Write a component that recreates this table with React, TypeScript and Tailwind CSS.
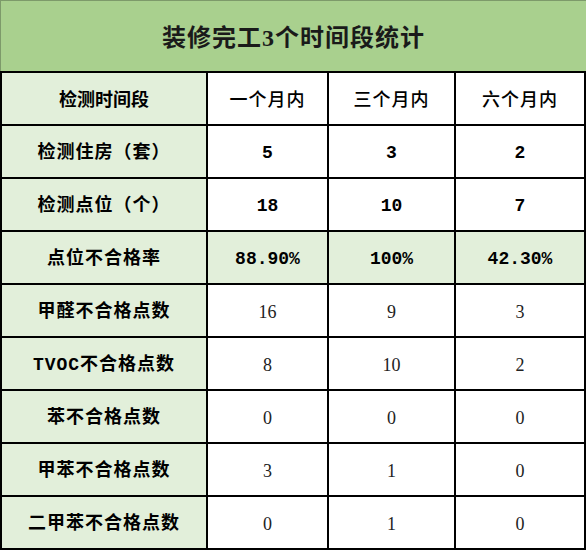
type Row = {
  label: string;
  values: string[];
  boldValues?: boolean;
  highlight?: boolean;
};

const rows: Row[] = [
  { label: "检测住房（套）", values: ["5", "3", "2"], boldValues: true },
  { label: "检测点位（个）", values: ["18", "10", "7"], boldValues: true },
  { label: "点位不合格率", values: ["88.90%", "100%", "42.30%"], boldValues: true, highlight: true },
  { label: "甲醛不合格点数", values: ["16", "9", "3"] },
  { label: "TVOC不合格点数", values: ["8", "10", "2"] },
  { label: "苯不合格点数", values: ["0", "0", "0"] },
  { label: "甲苯不合格点数", values: ["3", "1", "0"] },
  { label: "二甲苯不合格点数", values: ["0", "1", "0"] },
];

const serif = { fontFamily: '"Liberation Serif", "Noto Sans CJK SC", serif' };
const mono = { fontFamily: '"Liberation Mono", "Noto Sans CJK SC", monospace' };

function App() {
  return (
    <div className="w-[586px] h-[550px] overflow-hidden bg-white text-black" style={serif}>
      <div className="h-[71px] pt-[3px] bg-[#a9d08e] border-t border-l border-[#7d9a6a] flex items-center justify-center">
        <span className="text-[24px] font-bold text-[#1a1a1a] tracking-[1px]">装修完工3个时间段统计</span>
      </div>
      <div className="grid grid-cols-[204px_119px_125px_128px] gap-[2px] bg-black p-[2px] auto-rows-[51px]">
        <div className="bg-[#e2efda] pt-[3px] flex items-center justify-center text-[18px] font-bold">检测时间段</div>
        {["一个月内", "三个月内", "六个月内"].map((h) => (
          <div key={h} className="bg-white pt-[3px] flex items-center justify-center text-[18px] font-medium tracking-[1px]">
            {h}
          </div>
        ))}
        {rows.map((row) => (
          <>
            <div
              key={row.label}
              className="bg-[#e2efda] pt-[3px] flex items-center justify-center text-[18px] font-bold tracking-[1px]"
              style={mono}
            >
              {row.label}
            </div>
            {row.values.map((v, i) => (
              <div
                key={row.label + i}
                className={
                  "flex items-center justify-center pt-[3px] " +
                  (row.highlight ? "bg-[#e2efda] " : "bg-white ") +
                  (row.boldValues ? "font-bold text-[18px]" : "font-normal text-[18px] text-[#222]")
                }
                style={row.boldValues ? mono : serif}
              >
                {v}
              </div>
            ))}
          </>
        ))}
      </div>
    </div>
  );
}

export default App;
